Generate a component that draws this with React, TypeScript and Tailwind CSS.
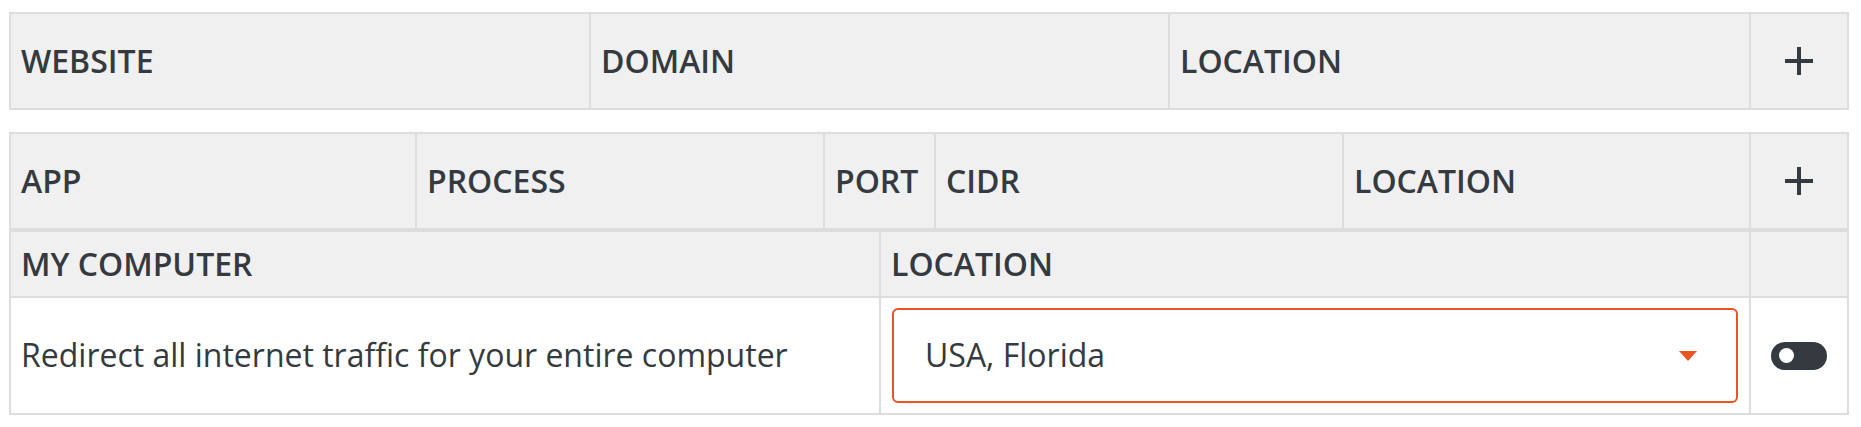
import React from "react";

function Plus() {
  return (
    <svg width="28" height="28" viewBox="0 0 28 28" aria-hidden="true">
      <rect x="12" y="0" width="4" height="28" fill="#343a40" />
      <rect x="0" y="12" width="28" height="4" fill="#343a40" />
    </svg>
  );
}

export default function App() {
  return (
    <div className="min-h-screen bg-white pt-[12px] pl-[9px] font-['Open_Sans',sans-serif] text-[32px] leading-[1.4] text-[#343a40]">
      {/* Table 1 */}
      <div className="flex h-[98px] w-[1840px] border-2 border-[#dddddd] bg-[#f0f0f0] font-semibold">
        <div className="flex w-[580px] items-center border-r-2 border-[#dddddd] pl-[10px]">WEBSITE</div>
        <div className="flex w-[579px] items-center border-r-2 border-[#dddddd] pl-[10px]">DOMAIN</div>
        <div className="flex w-[581px] items-center border-r-2 border-[#dddddd] pl-[10px]">LOCATION</div>
        <div className="flex flex-1 items-center justify-center">
          <Plus />
        </div>
      </div>

      {/* Table 2 */}
      <div className="mt-[22px] w-[1840px] border-2 border-[#dddddd]">
        <div className="flex h-[98px] border-b-4 border-[#dddddd] bg-[#f0f0f0] font-semibold">
          <div className="flex w-[406px] items-center border-r-2 border-[#dddddd] pl-[10px]">APP</div>
          <div className="flex w-[408px] items-center border-r-2 border-[#dddddd] pl-[10px]">PROCESS</div>
          <div className="flex w-[111px] items-center border-r-2 border-[#dddddd] pl-[10px]">PORT</div>
          <div className="flex w-[408px] items-center border-r-2 border-[#dddddd] pl-[10px]">CIDR</div>
          <div className="flex w-[407px] items-center border-r-2 border-[#dddddd] pl-[10px]">LOCATION</div>
          <div className="flex flex-1 items-center justify-center">
            <Plus />
          </div>
        </div>

        <div className="flex h-[66px] border-b-2 border-[#dddddd] bg-[#f0f0f0] font-semibold">
          <div className="flex w-[870px] items-center border-r-2 border-[#dddddd] pl-[10px]">MY COMPUTER</div>
          <div className="flex w-[870px] items-center border-r-2 border-[#dddddd] pl-[10px]">LOCATION</div>
          <div className="flex-1" />
        </div>

        <div className="flex h-[115px] bg-white">
          <div className="flex w-[870px] items-center border-r-2 border-[#dddddd] pl-[10px]">
            Redirect all internet traffic for your entire computer
          </div>
          <div className="flex w-[870px] items-center border-r-2 border-[#dddddd] px-[11px]">
            <div className="flex h-[95px] w-full items-center justify-between rounded-[6px] border-2 border-[#e95420] bg-white pl-[31px] pr-[39px]">
              <span>USA, Florida</span>
              <svg width="18" height="10" viewBox="0 0 18 10" aria-hidden="true">
                <polygon points="0,0 18,0 9,10" fill="#e95420" />
              </svg>
            </div>
          </div>
          <div className="flex flex-1 items-center justify-center">
            <div className="flex h-[28px] w-[56px] items-center rounded-full bg-[#343a40]">
              <div className="ml-[8px] h-[15px] w-[15px] rounded-full bg-white" />
            </div>
          </div>
        </div>
      </div>
    </div>
  );
}
